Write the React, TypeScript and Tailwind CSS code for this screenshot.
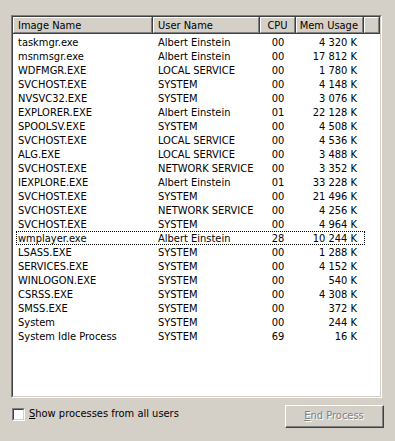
import React from 'react'

const rows = [
  ['taskmgr.exe', 'Albert Einstein', '00', '4 320 K'],
  ['msnmsgr.exe', 'Albert Einstein', '00', '17 812 K'],
  ['WDFMGR.EXE', 'LOCAL SERVICE', '00', '1 780 K'],
  ['SVCHOST.EXE', 'SYSTEM', '00', '4 148 K'],
  ['NVSVC32.EXE', 'SYSTEM', '00', '3 076 K'],
  ['EXPLORER.EXE', 'Albert Einstein', '01', '22 128 K'],
  ['SPOOLSV.EXE', 'SYSTEM', '00', '4 508 K'],
  ['SVCHOST.EXE', 'LOCAL SERVICE', '00', '4 536 K'],
  ['ALG.EXE', 'LOCAL SERVICE', '00', '3 488 K'],
  ['SVCHOST.EXE', 'NETWORK SERVICE', '00', '3 352 K'],
  ['IEXPLORE.EXE', 'Albert Einstein', '01', '33 228 K'],
  ['SVCHOST.EXE', 'SYSTEM', '00', '21 496 K'],
  ['SVCHOST.EXE', 'NETWORK SERVICE', '00', '4 256 K'],
  ['SVCHOST.EXE', 'SYSTEM', '00', '4 964 K'],
  ['wmplayer.exe', 'Albert Einstein', '28', '10 244 K'],
  ['LSASS.EXE', 'SYSTEM', '00', '1 288 K'],
  ['SERVICES.EXE', 'SYSTEM', '00', '4 152 K'],
  ['WINLOGON.EXE', 'SYSTEM', '00', '540 K'],
  ['CSRSS.EXE', 'SYSTEM', '00', '4 308 K'],
  ['SMSS.EXE', 'SYSTEM', '00', '372 K'],
  ['System', 'SYSTEM', '00', '244 K'],
  ['System Idle Process', 'SYSTEM', '69', '16 K'],
]

function HeaderCell({ label, className }: { label: string; className: string }) {
  return (
    <div className={`h-[17px] border-r border-b border-r-[#404040] border-b-[#404040] ${className}`}>
      <div className="h-full border-l border-t border-r border-b border-l-white border-t-white border-r-[#808080] border-b-[#808080] flex items-center px-[4px] leading-none">
        {label}
      </div>
    </div>
  )
}

export default function App() {
  return (
    <div
      className="w-[395px] h-[441px] bg-[#d4d0c8] pt-[15px] px-[11px] text-[11px] text-black whitespace-nowrap"
      style={{ fontFamily: '"DejaVu Sans Condensed", "Liberation Sans", sans-serif' }}
    >
      <div className="w-[371px] h-[383px] border border-t-[#808080] border-l-[#808080] border-r-white border-b-white">
        <div className="h-full border border-t-[#404040] border-l-[#404040] border-r-[#d4d0c8] border-b-[#d4d0c8] bg-white">
          <div className="flex bg-[#d4d0c8]">
            <HeaderCell label="Image Name" className="w-[140px]" />
            <HeaderCell label="User Name" className="w-[107px]" />
            <HeaderCell label="CPU" className="w-[36px] [&>div]:justify-center" />
            <HeaderCell label="Mem Usage" className="w-[68px] [&>div]:justify-end" />
            <HeaderCell label="" className="flex-1" />
          </div>
          <div className="pt-[1px]">
            {rows.map((r, i) => (
              <div
                key={i}
                className={`flex h-[14px] items-center ml-[3px] w-[349px] ${
                  i === 14 ? 'outline outline-1 outline-dotted outline-black -outline-offset-1' : ''
                }`}
              >
                <div className="w-[140px] pl-[2px] leading-none">{r[0]}</div>
                <div className="w-[104px] pl-[2px] leading-none">{r[1]}</div>
                <div className="w-[36px] text-center leading-none">{r[2]}</div>
                <div className="w-[61px] text-right leading-none">{r[3]}</div>
              </div>
            ))}
          </div>
        </div>
      </div>
      <div className="flex items-start justify-between mt-[7px]">
        <label className="flex items-center gap-[4px] mt-[1px] ml-[1px]">
          <span className="w-[13px] h-[13px] border border-t-[#808080] border-l-[#808080] border-r-white border-b-white">
            <span className="block w-full h-full bg-white border border-t-[#404040] border-l-[#404040] border-r-[#d4d0c8] border-b-[#d4d0c8]" />
          </span>
          <span>
            <span className="underline">S</span>how processes from all users
          </span>
        </label>
        <div className="w-[99px] h-[23px] border border-t-white border-l-white border-r-[#404040] border-b-[#404040]">
          <div className="h-full border-r border-b border-r-[#808080] border-b-[#808080] flex items-center justify-center text-[#808080] [text-shadow:1px_1px_0_#ffffff]">
            <span>
              <span className="underline">E</span>nd Process
            </span>
          </div>
        </div>
      </div>
    </div>
  )
}
